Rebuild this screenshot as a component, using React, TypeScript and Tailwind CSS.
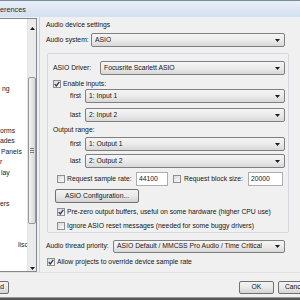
const listRows: { text: string; cls: string }[] = [
  { text: "", cls: "h-[10px]" },
  { text: "", cls: "h-[11px]" },
  { text: "", cls: "h-[10px]" },
  { text: "", cls: "h-[11px]" },
  { text: "", cls: "h-[10px]" },
  { text: "", cls: "h-[10px]" },
  { text: "ng", cls: "h-[11px] pl-[2px]" },
  { text: "", cls: "h-[10px]" },
  { text: "", cls: "h-[11px]" },
  { text: "", cls: "h-[10px]" },
  { text: "orms", cls: "h-[10px]" },
  { text: "ades", cls: "h-[11px]" },
  { text: "Panels", cls: "h-[10px] pl-[1px]" },
  { text: "r", cls: "h-[11px]" },
  { text: "lay", cls: "h-[10px] pl-[1px]" },
  { text: "", cls: "h-[10px]" },
  { text: "", cls: "h-[11px]" },
  { text: "ers", cls: "h-[10px]" },
  { text: "", cls: "h-[11px]" },
  { text: "", cls: "h-[10px]" },
  { text: "", cls: "h-[10px]" },
  { text: "lisc", cls: "h-[11px] pl-[18px]" },
];

function Arrow({ up }: { up?: boolean }) {
  return (
    <svg width="5" height="3" viewBox="0 0 5 3" className="shrink-0">
      <path d={up ? "M0 3h5L2.5 0z" : "M0 0h5L2.5 3z"} fill="#1a1a1a" />
    </svg>
  );
}

function Combo({ text, w }: { text: string; w: string }) {
  return (
    <div
      className={`${w} h-full flex items-center justify-between rounded-[2px] border border-[#7f7f7f] bg-linear-to-b from-[#f5f5f5] via-[#ebebeb] to-[#d8d8d8] pl-[3px] pr-[4px]`}
    >
      <span className="truncate">{text}</span>
      <Arrow />
    </div>
  );
}

function Check({ on }: { on?: boolean }) {
  return (
    <div className="w-[8px] h-[8px] shrink-0 flex items-center justify-center border border-[#8e8f8f] bg-linear-to-br from-[#d9d9d9] to-[#fafafa]">
      {on && (
        <svg width="6" height="6" viewBox="0 0 6 6">
          <path d="M0.7 3.1 2.3 4.9 5.3 0.8" stroke="#28365a" strokeWidth="1.3" fill="none" />
        </svg>
      )}
    </div>
  );
}

function Btn({ children, className }: { children: React.ReactNode; className: string }) {
  return (
    <div
      className={`h-full shrink-0 flex items-center justify-center rounded-[2px] border border-[#707070] bg-linear-to-b from-[#f3f3f3] via-[#e9e9e9] to-[#d3d3d3] ${className}`}
    >
      {children}
    </div>
  );
}

function Field({ value, w }: { value: string; w: string }) {
  return (
    <div className={`${w} h-full shrink-0 flex items-center border border-[#abadb3] bg-white pl-[2px]`}>
      {value}
    </div>
  );
}

function Scrollbar() {
  return (
    <div className="w-[9px] shrink-0 flex flex-col bg-[#ebebeb] border-l border-[#e3e3e3]">
      <div className="h-[18px] flex items-center justify-center">
        <Arrow up />
      </div>
      <div className="h-[228px] flex flex-col">
        <div className="mt-[40px] h-[147px] flex flex-col items-center justify-center gap-[1px] rounded-[2px] border border-[#979797] bg-linear-to-r from-[#f4f4f4] to-[#d6d6d6]">
          <div className="w-[4px] h-px bg-[#7a7a7a]" />
          <div className="w-[4px] h-px bg-[#7a7a7a]" />
          <div className="w-[4px] h-px bg-[#7a7a7a]" />
        </div>
      </div>
      <div className="flex-1 flex items-center justify-center">
        <Arrow />
      </div>
    </div>
  );
}

export default function App() {
  return (
    <div className="w-[300px] h-[300px] overflow-hidden flex flex-col bg-[#f0f0f0] text-[6.8px] leading-none text-[#151515] font-['Liberation_Sans',Arial,sans-serif] whitespace-nowrap">
      {/* title bar */}
      <div className="h-[17px] shrink-0 flex items-center pt-px border-t border-[#7c8a9e] bg-linear-to-b from-[#e8eff8] to-[#d3e0ef] text-[7.3px] text-[#2a2a2a]">
        <span>erences</span>
      </div>

      {/* main area */}
      <div className="h-[255px] shrink-0 flex">
        {/* page list */}
        <div className="w-[37px] shrink-0 mt-px flex border-t border-r border-b border-[#828790] bg-white">
          <div className="flex-1 overflow-hidden pt-[3px]">
            {listRows.map((r, i) => (
              <div key={i} className={`flex items-center ${r.cls}`}>
                <span className="text-[#1a1a1a]">{r.text}</span>
              </div>
            ))}
          </div>
          <Scrollbar />
        </div>

        {/* settings panel */}
        <div className="ml-[2px] flex-1 flex flex-col pl-[6px] pt-[3px] border-l border-[#d2d2d2]">
          <div className="h-[10px] flex items-center">Audio device settings</div>

          <div className="mt-[3px] h-[14px] flex items-center">
            <span className="w-[45px] shrink-0">Audio system:</span>
            <Combo text="ASIO" w="w-[194px]" />
          </div>

          {/* ASIO group */}
          <div className="mt-[6px] ml-px w-[242px] flex flex-col pl-[5px] pr-[3px] pt-[7px] pb-px rounded-[2px] border border-[#d5d9dd]">
            <div className="h-[14px] flex items-center">
              <span className="w-[47px] shrink-0">ASIO Driver:</span>
              <Combo text="Focusrite Scarlett ASIO" w="w-[185px]" />
            </div>

            <div className="mt-[4px] h-[10px] flex items-center gap-[2px]">
              <Check on />
              <span>Enable inputs:</span>
            </div>

            <div className="h-[14px] flex items-center pl-[17px]">
              <span className="w-[15px] shrink-0">first</span>
              <Combo text="1: Input 1" w="w-[200px]" />
            </div>
            <div className="mt-[5px] h-[14px] flex items-center pl-[17px]">
              <span className="w-[15px] shrink-0">last</span>
              <Combo text="2: Input 2" w="w-[200px]" />
            </div>

            <div className="mt-[3px] h-[10px] flex items-center">Output range:</div>

            <div className="mt-[2px] h-[14px] flex items-center pl-[17px]">
              <span className="w-[15px] shrink-0">first</span>
              <Combo text="1: Output 1" w="w-[200px]" />
            </div>
            <div className="mt-[3px] h-[14px] flex items-center pl-[17px]">
              <span className="w-[15px] shrink-0">last</span>
              <Combo text="2: Output 2" w="w-[200px]" />
            </div>

            <div className="mt-[4px] h-[14px] flex items-center pl-[4px]">
              <Check />
              <span className="ml-[2px] w-[69px] shrink-0">Request sample rate:</span>
              <Field value="44100" w="w-[32px]" />
              <div className="ml-[5px]">
                <Check />
              </div>
              <span className="ml-[3px] w-[64px] shrink-0">Request block size:</span>
              <Field value="20000" w="w-[35px]" />
            </div>

            <div className="mt-[3px] h-[14px] flex pl-[2px]">
              <Btn className="w-[84px]">ASIO Configuration...</Btn>
            </div>

            <div className="mt-[4px] h-[10px] flex items-center gap-[2px] pl-[4px]">
              <Check on />
              <span>Pre-zero output buffers, useful on some hardware (higher CPU use)</span>
            </div>
            <div className="mt-[4px] h-[10px] flex items-center gap-[2px] pl-[4px]">
              <Check />
              <span>Ignore ASIO reset messages (needed for some buggy drivers)</span>
            </div>
          </div>

          <div className="mt-[7px] h-[13px] flex items-center">
            <span className="w-[67px] shrink-0">Audio thread priority:</span>
            <Combo text="ASIO Default / MMCSS Pro Audio / Time Critical" w="w-[172px]" />
          </div>

          <div className="mt-[4px] h-[10px] flex items-center gap-[2px] pl-px">
            <Check on />
            <span>Allow projects to override device sample rate</span>
          </div>
        </div>
      </div>

      {/* footer buttons */}
      <div className="h-[25px] shrink-0 flex pt-[8px] pb-[3px] border-t border-[#e2e2e2]">
        <Btn className="-ml-[16px] w-[25px]">Load</Btn>
        <div className="flex-1" />
        <Btn className="w-[35px]">OK</Btn>
        <Btn className="ml-[4px] -mr-[13px] w-[35px]">Cancel</Btn>
      </div>

      <div className="h-[3px] shrink-0 border-t border-[#9a9a9a] bg-[#555555]" />
    </div>
  );
}
